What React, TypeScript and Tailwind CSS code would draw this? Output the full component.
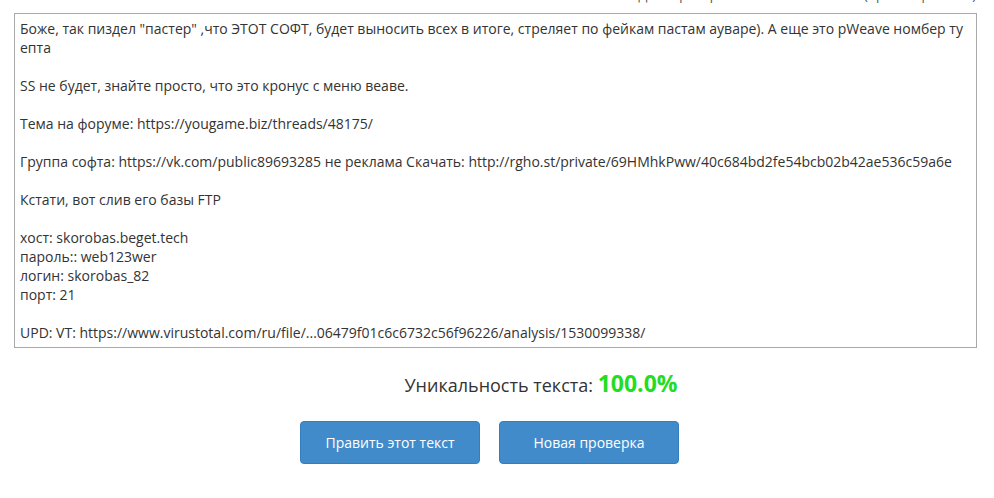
const lines = [
  'Боже, так пиздел "пастер" ,что ЭТОТ СОФТ, будет выносить всех в итоге, стреляет по фейкам пастам ауваре). А еще это pWeave номбер ту епта',
  "",
  "SS не будет, знайте просто, что это кронус с меню веаве.",
  "",
  "Тема на форуме: https://yougame.biz/threads/48175/",
  "",
  "Группа софта: https://vk.com/public89693285 не реклама Скачать: http://rgho.st/private/69HMhkPww/40c684bd2fe54bcb02b42ae536c59a6e",
  "",
  "Кстати, вот слив его базы FTP",
  "",
  "хост: skorobas.beget.tech",
  "пароль:: web123wer",
  "логин: skorobas_82",
  "порт: 21",
  "",
  "UPD: VT: https://www.virustotal.com/ru/file/...06479f01c6c6732c56f96226/analysis/1530099338/",
];

export default function App() {
  return (
    <div className="w-[994px] h-[498px] overflow-hidden bg-white font-['Open_Sans',sans-serif] text-[#333]">
      <div className="h-[13px] overflow-hidden flex justify-end pr-[18px]">
        <span className="text-[13px] leading-[19px] -mt-[14px] text-[#555]">
          Дата проверки: 27.06.2018 16:32:12 (просмотр в базе)
        </span>
      </div>
      <div className="mx-[14px] w-[963px] h-[335px] border border-[#a9a9a9] px-[5px] py-[5px] text-[14px] leading-[19px] whitespace-pre-wrap">
        {lines.map((l, i) => (
          <div key={i} className="min-h-[19px]">
            {l}
          </div>
        ))}
      </div>
      <div className="flex justify-center pl-[88px] mt-[21px] items-baseline text-[18px] leading-[28px] text-[#333]">
        <span>Уникальность текста:&nbsp;</span>
        <span className="text-[23px] font-bold text-[#22dd22]">100.0%</span>
      </div>
      <div className="flex justify-center gap-[19px] mt-[22px] pr-[15px]">
        <button
          type="button"
          className="w-[180px] h-[43px] rounded-[4px] border border-[#357ebd] bg-[#428bca] text-white text-[14px]"
        >
          Править этот текст
        </button>
        <button
          type="button"
          className="w-[180px] h-[43px] rounded-[4px] border border-[#357ebd] bg-[#428bca] text-white text-[14px]"
        >
          Новая проверка
        </button>
      </div>
    </div>
  );
}
